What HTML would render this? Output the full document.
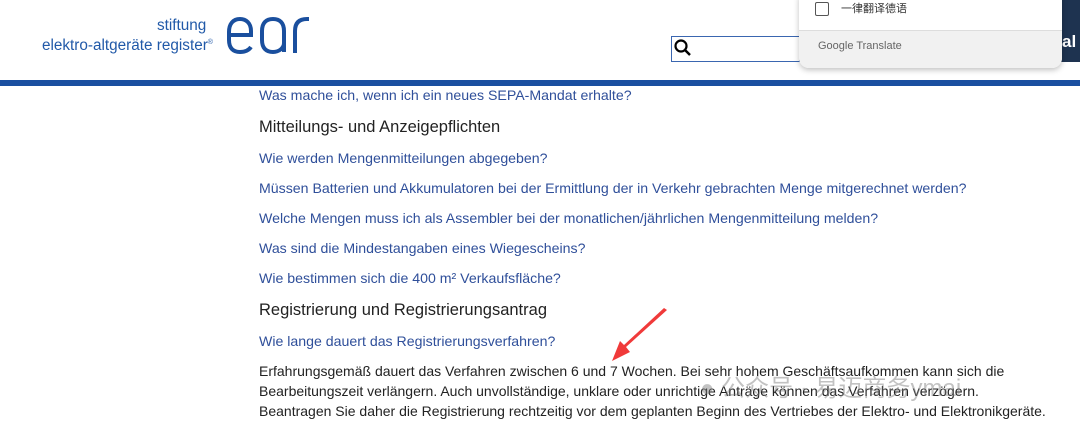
<!DOCTYPE html>
<html><head><meta charset="utf-8"><style>
body{margin:0;width:1080px;height:430px;overflow:hidden;background:#fff;font-family:"Liberation Sans","Noto Sans CJK SC",sans-serif;position:relative}
.a{position:absolute;white-space:nowrap}
.l{color:#2f4f9a;font-size:14.15px}
.h{color:#222;font-size:16.5px}
.t{color:#222;font-size:14px}
</style></head><body>
<div class="a" style="left:157px;top:17px;color:#2159a8;font-size:15.3px">stiftung</div>
<div class="a" style="left:42px;top:37px;color:#2159a8;font-size:15.3px">elektro-altgeräte register<sup style="font-size:7px">®</sup></div>
<svg class="a" style="left:225px;top:15px" width="90" height="42" viewBox="0 0 90 42">
<g fill="none" stroke="#1a4f9e" stroke-width="4">
<path d="M4,20 H26 V16 C26,8 21,4 15,4 C8,4 4,9 4,17 V25 C4,33 8,37 15,37 C20,37 24,35 26,32"/>
<path d="M59,37 V16 C59,8 55,4 48,4 C41,4 37,8 37,16 V25 C37,33 41,37 48,37 C54,37 59,33 59,28"/>
<path d="M70,38 V16 C70,8 74,4 82,4 H84"/>
</g></svg>
<div class="a" style="left:0;top:80px;width:1080px;height:6px;background:#1a4fa0"></div>
<div class="a" style="left:671px;top:36px;width:127px;height:24px;border:1px solid #3a66b0;background:#fff"></div>
<svg class="a" style="left:673px;top:38px" width="20" height="20" viewBox="0 0 20 20"><circle cx="8" cy="8" r="5.5" fill="none" stroke="#000" stroke-width="2.2"/><line x1="12" y1="12" x2="17" y2="17" stroke="#000" stroke-width="2.5"/></svg>
<div class="a" style="left:1060px;top:0;width:20px;height:62px;background:#1e3350"></div>
<div class="a" style="left:1062px;top:32px;color:#fff;font-weight:bold;font-size:17px">al</div>
<div class="a" style="left:799px;top:-10px;width:263px;height:78px;background:#fff;border-radius:10px;box-shadow:0 2px 6px rgba(0,0,0,.25);overflow:hidden">
<div style="position:absolute;left:16px;top:12px;width:12px;height:12px;border:1.5px solid #555;border-radius:2px"></div>
<div style="position:absolute;left:42px;top:10px;font-size:11px;color:#333">一律翻译德语</div>
<div style="position:absolute;left:0;top:40px;width:263px;height:40px;background:#f1f1f1;border-top:1px solid #ddd"></div>
<div style="position:absolute;left:19px;top:50px;font-size:11px;color:#666">Google Translate</div>
</div>
<div class="a l" style="left:259px;top:87px">Was mache ich, wenn ich ein neues SEPA-Mandat erhalte?</div>
<div class="a h" style="left:259px;top:118px">Mitteilungs- und Anzeigepflichten</div>
<div class="a l" style="left:259px;top:150px">Wie werden Mengenmitteilungen abgegeben?</div>
<div class="a l" style="left:259px;top:180px">Müssen Batterien und Akkumulatoren bei der Ermittlung der in Verkehr gebrachten Menge mitgerechnet werden?</div>
<div class="a l" style="left:259px;top:210px">Welche Mengen muss ich als Assembler bei der monatlichen/jährlichen Mengenmitteilung melden?</div>
<div class="a l" style="left:259px;top:240px">Was sind die Mindestangaben eines Wiegescheins?</div>
<div class="a l" style="left:259px;top:270px">Wie bestimmen sich die 400 m² Verkaufsfläche?</div>
<div class="a h" style="left:259px;top:301px">Registrierung und Registrierungsantrag</div>
<div class="a l" style="left:259px;top:333px">Wie lange dauert das Registrierungsverfahren?</div>
<div class="a t" style="left:259px;top:363px">Erfahrungsgemäß dauert das Verfahren zwischen 6 und 7 Wochen. Bei sehr hohem Geschäftsaufkommen kann sich die</div>
<div class="a t" style="left:259px;top:383px">Bearbeitungszeit verlängern. Auch unvollständige, unklare oder unrichtige Anträge können das Verfahren verzögern.</div>
<div class="a t" style="left:259px;top:403px">Beantragen Sie daher die Registrierung rechtzeitig vor dem geplanten Beginn des Vertriebes der Elektro- und Elektronikgeräte.</div>
<svg class="a" style="left:600px;top:305px" width="75" height="65" viewBox="0 0 75 65"><polygon points="67,5 26,42 30,47 12,56 20,36 24,40 64,3" fill="#f03a3a"/></svg>
<div class="a" style="left:700px;top:368px;color:rgba(120,120,120,.45);font-size:24px">● 公众号 · 易迈商务ymai</div>
</body></html>
